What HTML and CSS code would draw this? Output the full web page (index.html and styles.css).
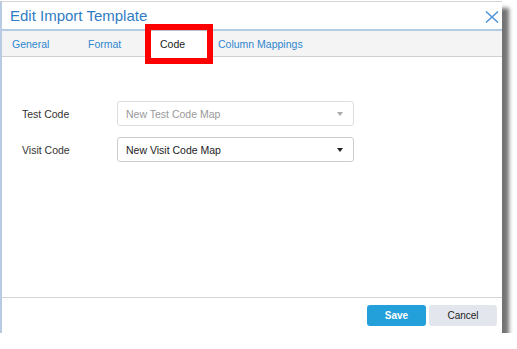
FILE: index.html
```html
<!DOCTYPE html>
<html lang="en">
<head>
    <meta charset="UTF-8">
    <meta name="viewport" content="width=device-width, initial-scale=1.0">
    <title>Edit Import Template</title>
    <link rel="stylesheet" href="styles.css">
</head>
<body>
    <div class="dialog">
        <div class="dialog-header">
            <h2 class="dialog-title">Edit Import Template</h2>
            <button class="close-btn" aria-label="Close">
                <svg width="14" height="12" viewBox="0 0 14 12">
                    <path d="M1 0.5 L13 11.5 M13 0.5 L1 11.5" stroke="#4f95d6" stroke-width="1.5" fill="none"/>
                </svg>
            </button>
        </div>

        <div class="tabs">
            <div class="tab">General</div>
            <div class="tab">Format</div>
            <div class="tab active">Code</div>
            <div class="tab tab-last">Column Mappings</div>
        </div>

        <div class="dialog-body">
            <div class="form-row">
                <label>Test Code</label>
                <div class="select disabled">
                    <span>New Test Code Map</span>
                    <span class="caret"></span>
                </div>
            </div>
            <div class="form-row">
                <label>Visit Code</label>
                <div class="select">
                    <span>New Visit Code Map</span>
                    <span class="caret"></span>
                </div>
            </div>
        </div>

        <div class="dialog-footer">
            <button class="btn btn-save">Save</button>
            <button class="btn btn-cancel">Cancel</button>
        </div>

        <!-- annotation box round the active tab -->
        <div class="highlight"></div>
    </div>
</body>
</html>
```

FILE: styles.css
```css
* {
    box-sizing: border-box;
}
body {
    margin: 0;
    background-color: #fff;
    font-family: "Liberation Sans", Arial, sans-serif;
    color: #333;
}
.dialog {
    position: relative;
    width: 502px;
    margin-top: 1px;
    background-color: #fff;
    border-top: 1px solid #d4d4d4;
    border-left: 2px solid #b9cbe0;
    box-shadow: 7px 7px 4px rgba(0, 0, 0, 0.55);
}
.dialog-header {
    height: 27px;
    display: flex;
    align-items: center;
    justify-content: space-between;
    padding: 0 3px 0 8px;
}
.dialog-title {
    margin: 0;
    font-size: 15px;
    font-weight: normal;
    color: #2f7cc4;
}
.close-btn {
    border: none;
    background: none;
    padding: 0;
    width: 14px;
    height: 12px;
    margin-top: 2px;
    display: flex;
}
.tabs {
    display: grid;
    grid-template-columns: 76px 72px 56px auto;
    height: 28px;
    padding-left: 1px;
    background-color: #f4f4f4;
    border-top: 2px solid #b3cbe3;
    border-bottom: 1px solid #cfcfcf;
}
.tab {
    display: flex;
    align-items: center;
    padding: 0 9px;
    font-size: 10.5px;
    color: #2f86cf;
}
.tab-last {
    padding-left: 11px;
}
.tab.active {
    margin-top: -2px;
    margin-bottom: -1px;
    border-top: 2px solid #b8c0c8;
    background-color: #fff;
    color: #222;
}
.dialog-body {
    height: 240px;
    padding: 44px 0 0 20px;
    display: flex;
    flex-direction: column;
    gap: 11px;
}
.form-row {
    display: flex;
    align-items: center;
}
.form-row label {
    width: 95px;
    font-size: 10.5px;
    color: #333;
}
.select {
    width: 237px;
    height: 25px;
    display: flex;
    align-items: center;
    justify-content: space-between;
    padding: 0 10px 0 8px;
    border: 1px solid #cdcdcd;
    border-radius: 3px;
    font-size: 10.5px;
    color: #222;
}
.select.disabled {
    border-color: #dedede;
    color: #999;
}
.caret {
    width: 0;
    height: 0;
    border-left: 3px solid transparent;
    border-right: 3px solid transparent;
    border-top: 4px solid #222;
}
.select.disabled .caret {
    border-top-color: #aaa;
}
.dialog-footer {
    height: 36px;
    border-top: 1px solid #d6d6d6;
    display: flex;
    align-items: center;
    justify-content: flex-end;
    gap: 3px;
    padding-right: 5px;
}
.btn {
    height: 21px;
    border: none;
    border-radius: 3px;
    font-family: "Liberation Sans", Arial, sans-serif;
    font-size: 10px;
    cursor: pointer;
}
.btn-save {
    width: 59px;
    background-color: #239fd9;
    color: #fff;
    font-weight: bold;
}
.btn-cancel {
    width: 68px;
    background-color: #e4e6ee;
    color: #222;
}
.highlight {
    position: absolute;
    left: 143px;
    top: 22px;
    width: 68px;
    height: 40px;
    border: 6px solid #ff0000;
}
```
